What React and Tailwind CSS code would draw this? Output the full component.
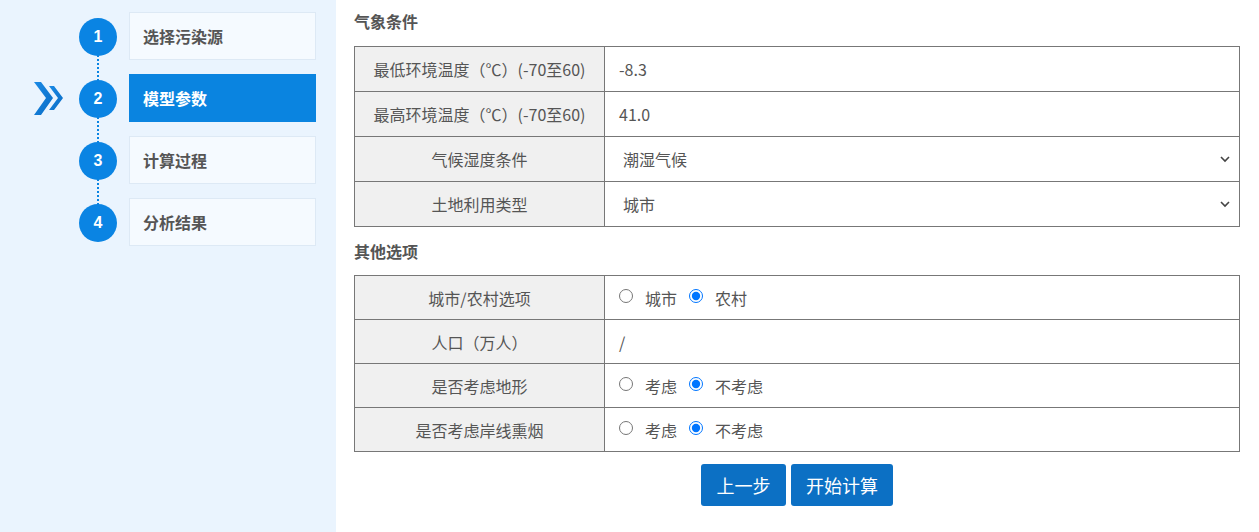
import React from 'react';

const steps = [
  { n: 1, label: '选择污染源' },
  { n: 2, label: '模型参数', active: true },
  { n: 3, label: '计算过程' },
  { n: 4, label: '分析结果' },
];

const ChevronDown = () => (
  <svg width="12" height="12" viewBox="0 0 12 12" className="text-[#444]">
    <path d="M2 4 L6 8 L10 4" fill="none" stroke="currentColor" strokeWidth="1.6" />
  </svg>
);

const ArrowIcon = () => (
  <svg width="30" height="34" viewBox="0 0 30 34">
    <defs>
      <linearGradient id="ag" x1="0" y1="0" x2="1" y2="1">
        <stop offset="0" stopColor="#1a8ae6" />
        <stop offset="1" stopColor="#0a6cc4" />
      </linearGradient>
    </defs>
    <polygon points="1,0 8,0 20,16 8,33 1,33 13,16" fill="url(#ag)" />
    <polygon points="16,4 21,4 30,16 21,28 16,28 25,16" fill="url(#ag)" />
  </svg>
);

const Radio = ({ name, checked, label }) => (
  <label className="flex items-center gap-[12px] mr-[12px]">
    <input type="radio" name={name} defaultChecked={checked} className="w-[14px] h-[14px] m-0 mt-[-3px]" />
    <span>{label}</span>
  </label>
);

const Row = ({ label, h, children }) => (
  <tr className={h}>
    <td className="w-[250px] bg-[#f0f0f0] border border-[#777] text-center text-[#555]">{label}</td>
    <td className="border border-[#777] pl-[14px] pr-[8px] text-[#555]">{children}</td>
  </tr>
);

const SelectCell = ({ value }) => (
  <div className="flex items-center justify-between pl-[4px]">
    <span>{value}</span>
    <ChevronDown />
  </div>
);

export default function App() {
  return (
    <div
      className="flex w-[1259px] h-[532px] bg-white text-[16px]"
      style={{ fontFamily: '"Noto Sans CJK SC", "Liberation Sans", sans-serif' }}
    >
      {/* Sidebar */}
      <div className="w-[336px] bg-[#eaf4fe] pt-[12px]">
        {steps.map((s, i) => (
          <div key={s.n} className="flex h-[62px]">
            <div className="w-[79px] flex justify-end items-start pr-[16px] pt-[8px]">
              {s.active && <ArrowIcon />}
            </div>
            <div className="w-[38px] flex flex-col items-center">
              <div className="mt-[6px] w-[38px] h-[38px] rounded-full bg-[#0a84e3] text-white font-bold text-[16px] flex items-center justify-center" style={{ fontFamily: '"Liberation Sans", sans-serif' }}>
                {s.n}
              </div>
              {i < steps.length - 1 && (
                <div className="flex-1 border-l-2 border-dotted border-[#0a84e3] mt-[-1px] mb-[-7px]" />
              )}
            </div>
            <div
              className={`ml-[12px] w-[187px] h-[48px] flex items-center pl-[13px] font-bold text-[16px] border ${
                s.active ? 'bg-[#0a84e0] border-[#0a84e0] text-white' : 'bg-[#f5faff] border-[#dde9f5] text-[#555]'
              }`}
            >
              {s.label}
            </div>
          </div>
        ))}
      </div>

      {/* Content */}
      <div className="flex-1 pl-[18px] pr-[19px]">
        <div className="h-[46px] pt-[9px] font-bold text-[#555]">气象条件</div>
        <table className="w-[886px] border-collapse">
          <tbody>
            <Row label="最低环境温度（℃）(-70至60)" h="h-[45px]">-8.3</Row>
            <Row label="最高环境温度（℃）(-70至60)" h="h-[45px]">41.0</Row>
            <Row label="气候湿度条件" h="h-[45px]"><SelectCell value="潮湿气候" /></Row>
            <Row label="土地利用类型" h="h-[45px]"><SelectCell value="城市" /></Row>
          </tbody>
        </table>
        <div className="h-[48px] pt-[12px] font-bold text-[#555]">其他选项</div>
        <table className="w-[886px] border-collapse">
          <tbody>
            <Row label="城市/农村选项" h="h-[44px]">
              <div className="flex items-center"><Radio name="a" label="城市" /><Radio name="a" checked label="农村" /></div>
            </Row>
            <Row label="人口（万人）" h="h-[44px]">/</Row>
            <Row label="是否考虑地形" h="h-[44px]">
              <div className="flex items-center"><Radio name="b" label="考虑" /><Radio name="b" checked label="不考虑" /></div>
            </Row>
            <Row label="是否考虑岸线熏烟" h="h-[44px]">
              <div className="flex items-center"><Radio name="c" label="考虑" /><Radio name="c" checked label="不考虑" /></div>
            </Row>
          </tbody>
        </table>
        <div className="w-[886px] flex justify-center gap-[5px] mt-[12px]">
          <button className="w-[85px] h-[42px] rounded-[3px] bg-[#0c70c4] text-white text-[18px]">上一步</button>
          <button className="w-[102px] h-[42px] rounded-[3px] bg-[#0c70c4] text-white text-[18px]">开始计算</button>
        </div>
      </div>
    </div>
  );
}
